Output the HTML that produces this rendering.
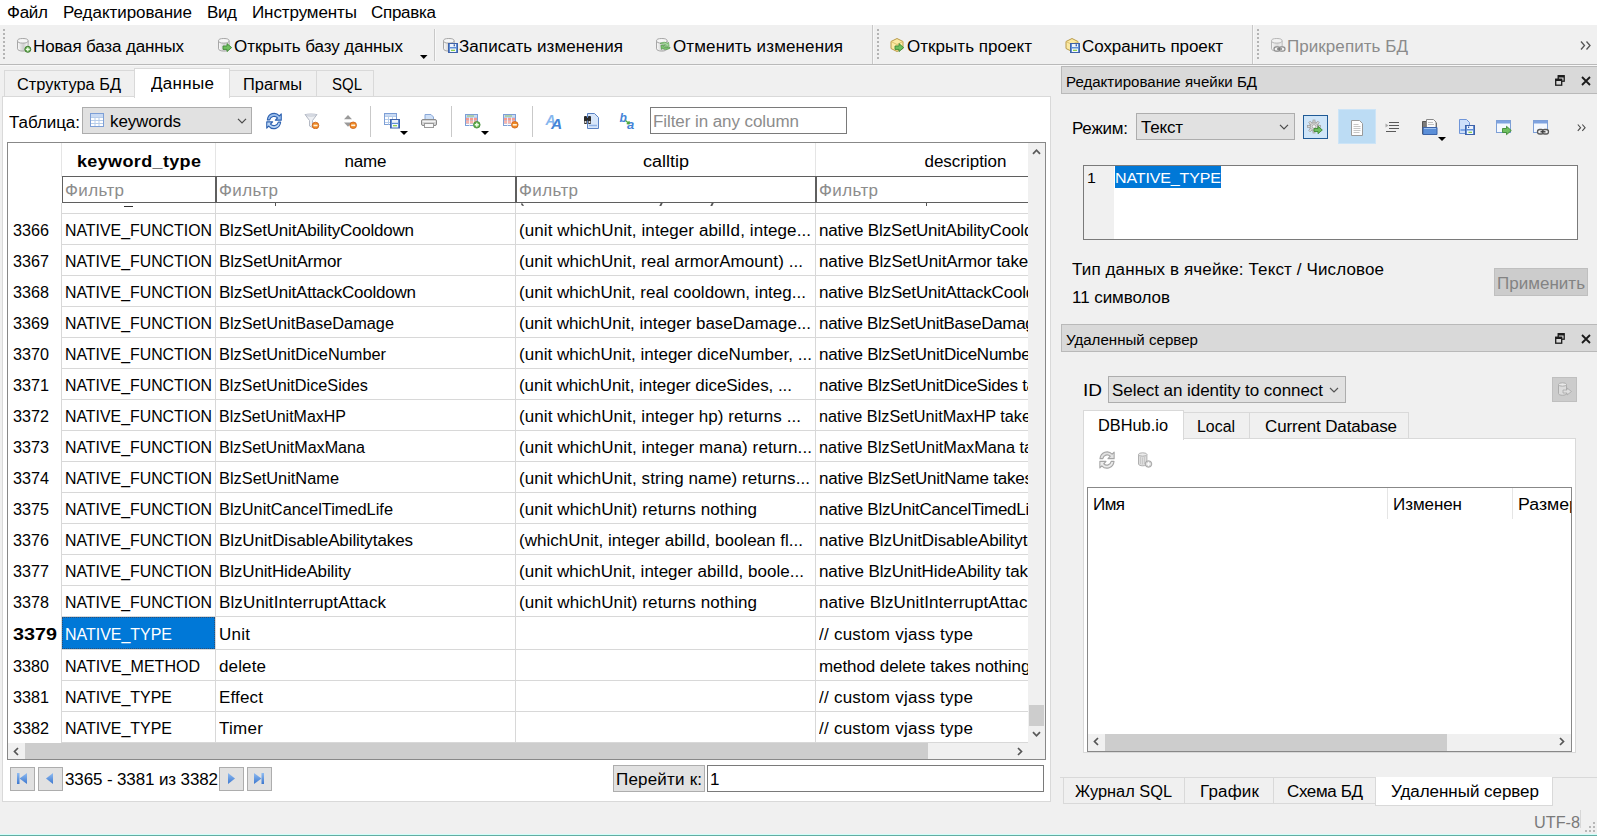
<!DOCTYPE html>
<html lang="ru"><head><meta charset="utf-8"><title>DB Browser for SQLite</title>
<style>
html,body{margin:0;padding:0;}
body{width:1597px;height:836px;overflow:hidden;background:#f0f0f0;font-family:"Liberation Sans", "DejaVu Sans", sans-serif;font-size:17px;position:relative;}
#root{position:absolute;left:0;top:0;width:1597px;height:836px;overflow:hidden;}
#root div,#root span,#root svg{position:absolute;box-sizing:border-box;}
.t{white-space:nowrap;transform:scaleY(0.955);}
</style></head>
<body><div id="root">
<div style="left:0px;top:0px;width:1597px;height:25px;background:#ffffff;"></div>
<span id="t0" class="t " style="top:3px;font-size:17px;line-height:20px;transform-origin:0 15px;letter-spacing:-0.266px;left:7px;">Файл</span>
<span id="t1" class="t " style="top:3px;font-size:17px;line-height:20px;transform-origin:0 15px;letter-spacing:-0.040px;left:63px;">Редактирование</span>
<span id="t2" class="t " style="top:3px;font-size:17px;line-height:20px;transform-origin:0 15px;letter-spacing:-0.383px;left:207px;">Вид</span>
<span id="t3" class="t " style="top:3px;font-size:17px;line-height:20px;transform-origin:0 15px;letter-spacing:-0.102px;left:252px;">Инструменты</span>
<span id="t4" class="t " style="top:3px;font-size:17px;line-height:20px;transform-origin:0 15px;letter-spacing:-0.284px;left:371px;">Справка</span>
<div style="left:0px;top:25px;width:1597px;height:39px;background:#f0f0f0;"></div>
<div style="left:0px;top:64px;width:1597px;height:1px;background:#b9b9b9;"></div>
<div style="left:0px;top:65px;width:1597px;height:1px;background:#f8f8f8;"></div>
<div style="left:3px;top:29px;width:2px;height:32px;background:repeating-linear-gradient(to bottom,#b4b4b4 0,#b4b4b4 2px,transparent 2px,transparent 4px);"></div>
<svg style="left:16px;top:37px" width="16" height="16" viewBox="0 0 16 16"><defs><linearGradient id="cg1" x1="0" y1="0" x2="1" y2="0"><stop offset="0" stop-color="#fbfbfb"/><stop offset="0.550" stop-color="#cfcfcf"/><stop offset="1" stop-color="#fbfbfb"/></linearGradient></defs><path d="M1.500 3.800v8c0 1.300 2.400 2.300 5.300 2.300s5.300-1 5.300-2.300v-8" fill="url(#cg1)" stroke="#a6a6a6"/><ellipse cx="6.800" cy="3.800" rx="5.300" ry="2.300" fill="#f6f6f6" stroke="#a6a6a6"/><circle cx="11.800" cy="12.300" r="3" fill="#6fb45c" stroke="#3f7a30" stroke-width="1"/><path d="M11.800 10.400v3.800M9.900 12.300h3.800" stroke="#efffe8" stroke-width="1.300"/></svg>
<span id="t5" class="t " style="top:37px;font-size:17px;line-height:20px;transform-origin:0 15px;letter-spacing:-0.151px;left:33px;">Новая база данных</span>
<svg style="left:217px;top:37px" width="16" height="16" viewBox="0 0 16 16"><defs><linearGradient id="cg2" x1="0" y1="0" x2="1" y2="0"><stop offset="0" stop-color="#fbfbfb"/><stop offset="0.550" stop-color="#cfcfcf"/><stop offset="1" stop-color="#fbfbfb"/></linearGradient></defs><path d="M1.500 3.800v8c0 1.300 2.400 2.300 5.300 2.300s5.300-1 5.300-2.300v-8" fill="url(#cg2)" stroke="#a6a6a6"/><ellipse cx="6.800" cy="3.800" rx="5.300" ry="2.300" fill="#f6f6f6" stroke="#a6a6a6"/><path d="M6 9h4V6.6l4.6 4-4.6 4V12.4H6z" fill="#6fbf5f" stroke="#3f8a35" stroke-width="0.9" stroke-linejoin="round"/></svg>
<span id="t6" class="t " style="top:37px;font-size:17px;line-height:20px;transform-origin:0 15px;letter-spacing:-0.044px;left:234px;">Открыть базу данных</span>
<svg style="left:420px;top:55px" width="8" height="4" viewBox="0 0 8 4"><path d="M0 0h7.500L3.750 4z" fill="#000"/></svg>
<div style="left:434px;top:29px;width:1px;height:32px;background:#c8c8c8;"></div>
<div style="left:435px;top:29px;width:1px;height:32px;background:#f8f8f8;"></div>
<svg style="left:442px;top:37px" width="16" height="16" viewBox="0 0 16 16"><defs><linearGradient id="cg3" x1="0" y1="0" x2="1" y2="0"><stop offset="0" stop-color="#fbfbfb"/><stop offset="0.550" stop-color="#cfcfcf"/><stop offset="1" stop-color="#fbfbfb"/></linearGradient></defs><path d="M1.500 3.800v8c0 1.300 2.400 2.300 5.300 2.300s5.300-1 5.300-2.300v-8" fill="url(#cg3)" stroke="#a6a6a6"/><ellipse cx="6.800" cy="3.800" rx="5.300" ry="2.300" fill="#f6f6f6" stroke="#a6a6a6"/><rect x="6.5" y="6.5" width="9" height="9" fill="#5f8ed6" stroke="#3f62a8"/><rect x="8" y="7" width="6" height="3" fill="#eef3fb"/><rect x="11.6" y="7.3" width="1.4" height="2" fill="#3f62a8"/><rect x="8" y="11.5" width="6" height="3.5" fill="#f4f7fd"/><rect x="9" y="12.7" width="4" height="1.3" fill="#8fcf4f"/></svg>
<span id="t7" class="t " style="top:37px;font-size:17px;line-height:20px;transform-origin:0 15px;letter-spacing:0.074px;left:459px;">Записать изменения</span>
<svg style="left:655px;top:37px" width="16" height="16" viewBox="0 0 16 16"><defs><linearGradient id="cg4" x1="0" y1="0" x2="1" y2="0"><stop offset="0" stop-color="#fbfbfb"/><stop offset="0.550" stop-color="#cfcfcf"/><stop offset="1" stop-color="#fbfbfb"/></linearGradient></defs><path d="M1.500 3.800v8c0 1.300 2.400 2.300 5.300 2.300s5.300-1 5.300-2.300v-8" fill="url(#cg4)" stroke="#a6a6a6"/><ellipse cx="6.800" cy="3.800" rx="5.300" ry="2.300" fill="#f6f6f6" stroke="#a6a6a6"/><path d="M5 6.5c3-1.8 6-1.5 7.5 0l1-1.2.6 4-4 .1 1.1-1.3C10 7 7.5 7 5 6.5z" fill="#a8dba0" stroke="#5fa255" stroke-width="0.700"/><path d="M15 11.2c-3 1.8-6 1.5-7.5 0l-1 1.2-.6-4 4-.1-1.1 1.3c1.2 1.1 3.700 1.100 6.200.6z" fill="#7cc470" stroke="#4d9444" stroke-width="0.700"/></svg>
<span id="t8" class="t " style="top:37px;font-size:17px;line-height:20px;transform-origin:0 15px;letter-spacing:0.131px;left:673px;">Отменить изменения</span>
<div style="left:872px;top:25px;width:1px;height:39px;background:#c8c8c8;"></div>
<div style="left:873px;top:25px;width:1px;height:39px;background:#f8f8f8;"></div>
<div style="left:877px;top:29px;width:2px;height:32px;background:repeating-linear-gradient(to bottom,#b4b4b4 0,#b4b4b4 2px,transparent 2px,transparent 4px);"></div>
<svg style="left:889px;top:37px" width="16" height="16" viewBox="0 0 16 16"><path d="M8 1.5l6 3v7l-6 3-6-3v-7z" fill="#fbe9a3" stroke="#b89a4a" stroke-linejoin="round"/><path d="M2 4.5l6 3 6-3M8 7.5v7" fill="none" stroke="#d6b65e" stroke-width="0.8"/><path d="M6 9h4V6.6l4.6 4-4.6 4V12.4H6z" fill="#6fbf5f" stroke="#3f8a35" stroke-width="0.9" stroke-linejoin="round"/></svg>
<span id="t9" class="t " style="top:37px;font-size:17px;line-height:20px;transform-origin:0 15px;letter-spacing:0.040px;left:907px;">Открыть проект</span>
<svg style="left:1064px;top:37px" width="16" height="16" viewBox="0 0 16 16"><path d="M8 1.5l6 3v7l-6 3-6-3v-7z" fill="#fbe9a3" stroke="#b89a4a" stroke-linejoin="round"/><path d="M2 4.5l6 3 6-3M8 7.5v7" fill="none" stroke="#d6b65e" stroke-width="0.8"/><rect x="6.5" y="6.5" width="9" height="9" fill="#5f8ed6" stroke="#3f62a8"/><rect x="8" y="7" width="6" height="3" fill="#eef3fb"/><rect x="11.6" y="7.3" width="1.4" height="2" fill="#3f62a8"/><rect x="8" y="11.5" width="6" height="3.5" fill="#f4f7fd"/><rect x="9" y="12.7" width="4" height="1.3" fill="#8fcf4f"/></svg>
<span id="t10" class="t " style="top:37px;font-size:17px;line-height:20px;transform-origin:0 15px;letter-spacing:-0.079px;left:1082px;">Сохранить проект</span>
<div style="left:1252px;top:25px;width:1px;height:39px;background:#c8c8c8;"></div>
<div style="left:1253px;top:25px;width:1px;height:39px;background:#f8f8f8;"></div>
<div style="left:1257px;top:29px;width:2px;height:32px;background:repeating-linear-gradient(to bottom,#b4b4b4 0,#b4b4b4 2px,transparent 2px,transparent 4px);"></div>
<svg style="left:1270px;top:37px" width="16" height="16" viewBox="0 0 16 16"><defs><linearGradient id="cg5" x1="0" y1="0" x2="1" y2="0"><stop offset="0" stop-color="#f6f6f6"/><stop offset="0.550" stop-color="#dadada"/><stop offset="1" stop-color="#f6f6f6"/></linearGradient></defs><path d="M1.500 3.800v8c0 1.300 2.400 2.300 5.300 2.300s5.300-1 5.300-2.300v-8" fill="url(#cg5)" stroke="#b6b6b6"/><ellipse cx="6.800" cy="3.800" rx="5.300" ry="2.300" fill="#f2f2f2" stroke="#b6b6b6"/><rect x="4" y="9.800" width="6" height="4.400" rx="2.200" fill="#f2f2f2" stroke="#8c8c8c" stroke-width="1.2"/><rect x="9" y="9.800" width="6" height="4.400" rx="2.200" fill="#f2f2f2" stroke="#8c8c8c" stroke-width="1.2"/><path d="M7 12h5" stroke="#6c6c6c" stroke-width="1.3"/></svg>
<span id="t11" class="t " style="top:37px;font-size:17px;line-height:20px;color:#8b8b8b;transform-origin:0 15px;letter-spacing:0.061px;left:1287px;">Прикрепить БД</span>
<svg style="left:1580px;top:41px" width="12" height="9" viewBox="0 0 12 9"><path d="M1 0.500l3.500 4-3.500 4M6.500 0.500l3.500 4-3.500 4" fill="none" stroke="#555" stroke-width="1.300"/></svg>
<div style="left:2px;top:96px;width:1049px;height:706px;background:#ffffff;border:1px solid #d9d9d9;"></div>
<div style="left:4px;top:70px;width:131px;height:27px;background:#f0f0f0;border:1px solid #d9d9d9;"></div>
<span id="t12" class="t " style="top:75px;font-size:17px;line-height:20px;transform-origin:0 15px;transform:scale(0.9625,0.955);left:17px;">Структура БД</span>
<div style="left:228px;top:70px;width:89px;height:27px;background:#f0f0f0;border:1px solid #d9d9d9;"></div>
<span id="t13" class="t " style="top:75px;font-size:17px;line-height:20px;transform-origin:0 15px;transform:scale(0.9633,0.955);left:243px;">Прагмы</span>
<div style="left:316px;top:70px;width:58px;height:27px;background:#f0f0f0;border:1px solid #d9d9d9;"></div>
<span id="t14" class="t " style="top:75px;font-size:17px;line-height:20px;transform-origin:0 15px;transform:scale(0.8815,0.955);left:332px;">SQL</span>
<div style="left:134px;top:68px;width:96px;height:30px;background:#ffffff;border:1px solid #d9d9d9;border-bottom:none;"></div>
<span id="t15" class="t " style="top:74px;font-size:17px;line-height:20px;transform-origin:0 15px;letter-spacing:0.316px;left:151px;">Данные</span>
<span id="t16" class="t " style="top:113px;font-size:17px;line-height:20px;transform-origin:0 15px;letter-spacing:-0.056px;left:9px;">Таблица:</span>
<div style="left:82px;top:107px;width:170px;height:27px;background:#e1e1e1;border:1px solid #adadad;"></div>
<svg style="left:89px;top:112px" width="16" height="16" viewBox="0 0 16 16"><rect x="1.5" y="1.500" width="13" height="13" fill="#ffffff" stroke="#7d9fd6"/><rect x="2" y="2" width="12" height="3" fill="#c9daf3"/><path d="M2 5.500h12M2 8.500h12M2 11.500h12M6 5v9M10 5v9" stroke="#b7cdea" stroke-width="1" fill="none"/></svg>
<span id="t17" class="t " style="top:112px;font-size:17px;line-height:20px;transform-origin:0 15px;letter-spacing:-0.116px;left:110px;">keywords</span>
<svg style="left:237px;top:118px" width="10" height="6" viewBox="0 0 10 6"><path d="M1 0.800l4 4 4-4" fill="none" stroke="#4a4a4a" stroke-width="1.200"/></svg>
<svg style="left:266px;top:112px" width="16" height="18" viewBox="1.500 1.200 13 13.600" preserveAspectRatio="none"><path d="M2.600 7.200A5.500 5.500 0 0 1 12.300 4.200L13.900 2.600v4.800H9.100l1.700-1.700A3.700 3.700 0 0 0 4.500 7.200z" fill="#9ec1ee" stroke="#2f62b0" stroke-width="0.900" stroke-linejoin="round"/><path d="M13.400 8.800A5.500 5.500 0 0 1 3.700 11.800L2.100 13.400V8.600H6.900L5.200 10.300A3.700 3.700 0 0 0 11.500 8.800z" fill="#bcd6f5" stroke="#2f62b0" stroke-width="0.900" stroke-linejoin="round"/></svg>
<svg style="left:304px;top:113px" width="16" height="16" viewBox="0 0 16 16"><path d="M1 1.500h12L8.500 7.500v7l-3-1.500v-5.500z" fill="#eef0f4" stroke="#b4b9c4" stroke-linejoin="round"/><ellipse cx="7" cy="2" rx="5.500" ry="1.200" fill="#dfe3ea" stroke="#b4b9c4" stroke-width="0.600"/><circle cx="11.5" cy="12.5" r="3.300" fill="#f08a24" stroke="#c8601a" stroke-width="0.800"/><rect x="9.5" y="11.7" width="4" height="1.600" fill="#fff3e0"/></svg>
<svg style="left:342px;top:113px" width="16" height="16" viewBox="0 0 16 16"><path d="M2 6.300h8L6 2z" fill="#9a9a9a"/><path d="M2 9.500h8L6 13.800z" fill="#9a9a9a"/><circle cx="11.2" cy="12.3" r="3.300" fill="#f08a24" stroke="#c8601a" stroke-width="0.800"/><rect x="9.2" y="11.5" width="4" height="1.600" fill="#fff3e0"/></svg>
<div style="left:370px;top:106px;width:1px;height:31px;background:#c9c9c9;"></div>
<svg style="left:384px;top:112px" width="16" height="17" viewBox="0 0 16 17"><rect x="0.500" y="1.500" width="12" height="11" fill="#ffffff" stroke="#7d9fd6"/><rect x="1" y="2" width="11" height="2.500" fill="#c9daf3"/><path d="M1 4.500h11M1 7.500h11M1 10.500h11M4.500 4.500v8M8.500 4.500v8" stroke="#b7cdea" fill="none"/><rect x="6.500" y="7.500" width="9" height="8.500" fill="#5f8ed6" stroke="#3f62a8"/><rect x="8" y="8" width="6" height="2.800" fill="#eef3fb"/><rect x="8" y="12" width="6" height="3.500" fill="#f4f7fd"/><rect x="9" y="13" width="4" height="1.300" fill="#8fcf4f"/></svg>
<svg style="left:400px;top:131px" width="8" height="4" viewBox="0 0 8 4"><path d="M0 0h8L4 4z" fill="#000"/></svg>
<svg style="left:421px;top:113px" width="16" height="16" viewBox="0 0 16 16"><path d="M4 1.500h6l2.500 2.500v4h-8.500z" fill="#cfe0f7" stroke="#8aa8d8"/><rect x="0.500" y="6.500" width="15" height="6" rx="1.500" fill="#d4d4d4" stroke="#8a8a8a"/><rect x="3.500" y="10.500" width="9" height="4" fill="#fafafa" stroke="#9a9a9a"/><path d="M1.500 8.500h13" stroke="#f4f4f4"/></svg>
<div style="left:451px;top:106px;width:1px;height:31px;background:#c9c9c9;"></div>
<svg style="left:465px;top:113px" width="16" height="16" viewBox="0 0 16 16"><rect x="0.500" y="1.500" width="12" height="11" fill="#ffffff" stroke="#7d9fd6"/><rect x="1" y="2" width="11" height="2.500" fill="#c9daf3"/><path d="M1 4.500h11M1 7.500h11M1 10.500h11M4.500 4.500v8M8.500 4.500v8" stroke="#b7cdea" fill="none"/><rect x="1" y="5" width="11" height="2.500" fill="#f59a90"/><rect x="1" y="8" width="11" height="2.500" fill="#f8b4ac"/><path d="M4.500 4.500v8M8.500 4.500v8" stroke="#ffffff" stroke-width="0.800"/><path d="M2 3h7" stroke="#8fc06a" stroke-width="1"/><circle cx="11.8" cy="11.8" r="3.300" fill="#62ad4e" stroke="#3f8a35" stroke-width="0.800"/><path d="M11.8 9.8v4M9.8 11.8h4" stroke="#f0ffe8" stroke-width="1.400"/></svg>
<svg style="left:481px;top:131px" width="8" height="4" viewBox="0 0 8 4"><path d="M0 0h8L4 4z" fill="#000"/></svg>
<svg style="left:503px;top:113px" width="16" height="16" viewBox="0 0 16 16"><rect x="0.500" y="1.500" width="12" height="11" fill="#ffffff" stroke="#7d9fd6"/><rect x="1" y="2" width="11" height="2.500" fill="#c9daf3"/><path d="M1 4.500h11M1 7.500h11M1 10.500h11M4.500 4.500v8M8.500 4.500v8" stroke="#b7cdea" fill="none"/><rect x="1" y="5" width="11" height="2.500" fill="#f59a90"/><rect x="1" y="8" width="11" height="2.500" fill="#f8b4ac"/><path d="M4.500 4.500v8M8.500 4.500v8" stroke="#ffffff" stroke-width="0.800"/><path d="M2 3h7" stroke="#8fc06a" stroke-width="1"/><circle cx="11.8" cy="11.8" r="3.300" fill="#f08a24" stroke="#c8601a" stroke-width="0.800"/><rect x="9.8" y="11.0" width="4" height="1.600" fill="#fff3e0"/></svg>
<div style="left:532px;top:106px;width:1px;height:31px;background:#c9c9c9;"></div>
<svg style="left:545px;top:112px" width="19" height="18" viewBox="0 0 19 18"><text x="0.500" y="12.500" font-family="Liberation Sans, sans-serif" font-size="14" font-style="italic" font-weight="bold" fill="#86b6ee">A</text><text x="6" y="16.500" font-family="Liberation Sans, sans-serif" font-size="15.500" font-style="italic" font-weight="bold" fill="#4484d8">A</text></svg>
<svg style="left:583px;top:113px" width="16" height="16" viewBox="0 0 16 16"><path d="M4.500 0.500h7l4 4v11h-11z" fill="#d7e6fa" stroke="#5a82c4"/><path d="M6 12.500h8" stroke="#8fb2e6" stroke-width="1.500"/><rect x="1" y="3" width="3" height="8" rx="1" fill="#2a2a2a"/><rect x="5" y="3" width="3" height="8" rx="1" fill="#2a2a2a"/><rect x="3.500" y="5" width="2" height="2.500" fill="#2a2a2a"/><rect x="1.600" y="8" width="1.800" height="2" fill="#d8d8d8"/><rect x="5.600" y="8" width="1.800" height="2" fill="#d8d8d8"/></svg>
<svg style="left:619px;top:111px" width="19" height="19" viewBox="0 0 19 19"><text x="0.500" y="11" font-family="Liberation Sans, sans-serif" font-size="12" font-style="italic" font-weight="bold" fill="#4484d8">b</text><text x="8" y="18" font-family="Liberation Sans, sans-serif" font-size="13" font-style="italic" font-weight="bold" fill="#4484d8">a</text><path d="M6.500 9.500l3.500 3M10.300 12.800l-0.400-2.600M10.300 12.800l-2.600-0.200" stroke="#4fa83f" stroke-width="1.300" fill="none"/></svg>
<div style="left:650px;top:107px;width:197px;height:27px;background:#ffffff;border:1px solid #7a7a7a;"></div>
<span id="t18" class="t " style="top:112px;font-size:17px;line-height:20px;color:#8c8c8c;transform-origin:0 15px;letter-spacing:-0.073px;left:653px;">Filter in any column</span>
<div style="left:7px;top:142px;width:1039px;height:618px;background:#ffffff;border:1px solid #888888;"></div>
<div style="left:61px;top:143px;width:1px;height:34px;background:#e5e5e5;"></div>
<div style="left:215px;top:143px;width:1px;height:34px;background:#e5e5e5;"></div>
<div style="left:515px;top:143px;width:1px;height:34px;background:#e5e5e5;"></div>
<div style="left:815px;top:143px;width:1px;height:34px;background:#e5e5e5;"></div>
<span id="t19" class="t " style="top:151px;font-size:18px;line-height:20px;font-weight:bold;transform-origin:0 16px;letter-spacing:0.358px;left:77.0px;">keyword_type</span>
<span id="t20" class="t " style="top:152px;font-size:17px;line-height:20px;transform-origin:0 15px;letter-spacing:-0.177px;left:344.5px;">name</span>
<span id="t21" class="t " style="top:152px;font-size:17px;line-height:20px;transform-origin:0 15px;transform:scale(1.0582,0.955);left:642.5px;">calltip</span>
<span id="t22" class="t " style="top:152px;font-size:17px;line-height:20px;transform-origin:0 15px;letter-spacing:-0.022px;left:924.5px;">description</span>
<div style="left:62px;top:176px;width:154px;height:27px;background:#ffffff;border:1px solid #5f5f5f;"></div>
<span id="t23" class="t " style="top:181px;font-size:17px;line-height:20px;color:#8c8c8c;transform-origin:0 15px;letter-spacing:0.378px;left:65px;">Фильтр</span>
<div style="left:216px;top:176px;width:300px;height:27px;background:#ffffff;border:1px solid #5f5f5f;"></div>
<span id="t24" class="t " style="top:181px;font-size:17px;line-height:20px;color:#8c8c8c;transform-origin:0 15px;letter-spacing:0.378px;left:219px;">Фильтр</span>
<div style="left:516px;top:176px;width:300px;height:27px;background:#ffffff;border:1px solid #5f5f5f;"></div>
<span id="t25" class="t " style="top:181px;font-size:17px;line-height:20px;color:#8c8c8c;transform-origin:0 15px;letter-spacing:0.378px;left:519px;">Фильтр</span>
<div style="left:816px;top:176px;width:300px;height:27px;background:#ffffff;border:1px solid #5f5f5f;clip-path:inset(0 88px 0 0);"></div>
<span id="t26" class="t " style="top:181px;font-size:17px;line-height:20px;color:#8c8c8c;transform-origin:0 15px;letter-spacing:0.378px;left:819px;">Фильтр</span>
<div style="left:61px;top:203px;width:1px;height:540px;background:#d8d8d8;"></div>
<div style="left:215px;top:203px;width:1px;height:540px;background:#d8d8d8;"></div>
<div style="left:515px;top:203px;width:1px;height:540px;background:#d8d8d8;"></div>
<div style="left:815px;top:203px;width:1px;height:540px;background:#d8d8d8;"></div>
<div style="left:62px;top:213px;width:966px;height:1px;background:#d8d8d8;"></div>
<div style="left:124px;top:206px;width:9px;height:1px;background:#303030;"></div>
<div style="left:275px;top:203px;width:1px;height:3px;background:#555;"></div>
<div style="left:521px;top:203px;width:3px;height:3px;border-bottom:1.500px solid #444;border-left:1.500px solid #444;border-radius:0 0 0 3px;transform:skewX(-10deg)"></div>
<div style="left:660px;top:203px;width:2px;height:3px;background:#555;transform:skewX(-25deg)"></div>
<div style="left:711px;top:203px;width:2px;height:3px;background:#555;transform:skewX(-25deg)"></div>
<div style="left:926px;top:203px;width:1px;height:3px;background:#555;"></div>
<span id="t27" class="t " style="top:221px;font-size:17px;line-height:20px;transform-origin:0 15px;transform:scale(0.9517,0.955);left:13px;">3366</span>
<span id="t28" class="t " style="top:221px;font-size:17px;line-height:20px;transform-origin:0 15px;transform:scale(0.9338,0.955);left:65px;">NATIVE_FUNCTION</span>
<span id="t29" class="t " style="top:221px;font-size:17px;line-height:20px;transform-origin:0 15px;letter-spacing:-0.222px;left:219px;">BlzSetUnitAbilityCooldown</span>
<span id="t30" class="t " style="top:221px;font-size:17px;line-height:20px;transform-origin:0 15px;letter-spacing:0.092px;left:519px;">(unit whichUnit, integer abilId, intege...</span>
<span id="t31" class="t desc" style="top:221px;font-size:17px;line-height:20px;transform-origin:0 15px;letter-spacing:-0.174px;left:819px;width:209.0px;overflow:hidden;">native BlzSetUnitAbilityCooldown takes unit whichUnit</span>
<div style="left:62px;top:244px;width:966px;height:1px;background:#d8d8d8;"></div>
<span id="t32" class="t " style="top:252px;font-size:17px;line-height:20px;transform-origin:0 15px;transform:scale(0.9517,0.955);left:13px;">3367</span>
<span id="t33" class="t " style="top:252px;font-size:17px;line-height:20px;transform-origin:0 15px;transform:scale(0.9338,0.955);left:65px;">NATIVE_FUNCTION</span>
<span id="t34" class="t " style="top:252px;font-size:17px;line-height:20px;transform-origin:0 15px;letter-spacing:-0.189px;left:219px;">BlzSetUnitArmor</span>
<span id="t35" class="t " style="top:252px;font-size:17px;line-height:20px;transform-origin:0 15px;letter-spacing:0.066px;left:519px;">(unit whichUnit, real armorAmount) ...</span>
<span id="t36" class="t desc" style="top:252px;font-size:17px;line-height:20px;transform-origin:0 15px;letter-spacing:-0.130px;left:819px;width:209.0px;overflow:hidden;">native BlzSetUnitArmor takes unit whichUnit, real</span>
<div style="left:62px;top:275px;width:966px;height:1px;background:#d8d8d8;"></div>
<span id="t37" class="t " style="top:283px;font-size:17px;line-height:20px;transform-origin:0 15px;transform:scale(0.9517,0.955);left:13px;">3368</span>
<span id="t38" class="t " style="top:283px;font-size:17px;line-height:20px;transform-origin:0 15px;transform:scale(0.9338,0.955);left:65px;">NATIVE_FUNCTION</span>
<span id="t39" class="t " style="top:283px;font-size:17px;line-height:20px;transform-origin:0 15px;letter-spacing:-0.227px;left:219px;">BlzSetUnitAttackCooldown</span>
<span id="t40" class="t " style="top:283px;font-size:17px;line-height:20px;transform-origin:0 15px;letter-spacing:0.018px;left:519px;">(unit whichUnit, real cooldown, integ...</span>
<span id="t41" class="t desc" style="top:283px;font-size:17px;line-height:20px;transform-origin:0 15px;letter-spacing:-0.177px;left:819px;width:209.0px;overflow:hidden;">native BlzSetUnitAttackCooldown takes unit whichUnit</span>
<div style="left:62px;top:306px;width:966px;height:1px;background:#d8d8d8;"></div>
<span id="t42" class="t " style="top:314px;font-size:17px;line-height:20px;transform-origin:0 15px;transform:scale(0.9517,0.955);left:13px;">3369</span>
<span id="t43" class="t " style="top:314px;font-size:17px;line-height:20px;transform-origin:0 15px;transform:scale(0.9338,0.955);left:65px;">NATIVE_FUNCTION</span>
<span id="t44" class="t " style="top:314px;font-size:17px;line-height:20px;transform-origin:0 15px;transform:scale(0.9596,0.955);left:219px;">BlzSetUnitBaseDamage</span>
<span id="t45" class="t " style="top:314px;font-size:17px;line-height:20px;transform-origin:0 15px;letter-spacing:-0.025px;left:519px;">(unit whichUnit, integer baseDamage...</span>
<span id="t46" class="t desc" style="top:314px;font-size:17px;line-height:20px;transform-origin:0 15px;letter-spacing:-0.287px;left:819px;width:209.0px;overflow:hidden;">native BlzSetUnitBaseDamage takes unit whichUnit</span>
<div style="left:62px;top:337px;width:966px;height:1px;background:#d8d8d8;"></div>
<span id="t47" class="t " style="top:345px;font-size:17px;line-height:20px;transform-origin:0 15px;transform:scale(0.9517,0.955);left:13px;">3370</span>
<span id="t48" class="t " style="top:345px;font-size:17px;line-height:20px;transform-origin:0 15px;transform:scale(0.9338,0.955);left:65px;">NATIVE_FUNCTION</span>
<span id="t49" class="t " style="top:345px;font-size:17px;line-height:20px;transform-origin:0 15px;transform:scale(0.9606,0.955);left:219px;">BlzSetUnitDiceNumber</span>
<span id="t50" class="t " style="top:345px;font-size:17px;line-height:20px;transform-origin:0 15px;letter-spacing:0.026px;left:519px;">(unit whichUnit, integer diceNumber, ...</span>
<span id="t51" class="t desc" style="top:345px;font-size:17px;line-height:20px;transform-origin:0 15px;letter-spacing:-0.266px;left:819px;width:209.0px;overflow:hidden;">native BlzSetUnitDiceNumber takes unit whichUnit</span>
<div style="left:62px;top:368px;width:966px;height:1px;background:#d8d8d8;"></div>
<span id="t52" class="t " style="top:376px;font-size:17px;line-height:20px;transform-origin:0 15px;transform:scale(0.9517,0.955);left:13px;">3371</span>
<span id="t53" class="t " style="top:376px;font-size:17px;line-height:20px;transform-origin:0 15px;transform:scale(0.9338,0.955);left:65px;">NATIVE_FUNCTION</span>
<span id="t54" class="t " style="top:376px;font-size:17px;line-height:20px;transform-origin:0 15px;transform:scale(0.9557,0.955);left:219px;">BlzSetUnitDiceSides</span>
<span id="t55" class="t " style="top:376px;font-size:17px;line-height:20px;transform-origin:0 15px;letter-spacing:-0.052px;left:519px;">(unit whichUnit, integer diceSides, ...</span>
<span id="t56" class="t desc" style="top:376px;font-size:17px;line-height:20px;transform-origin:0 15px;letter-spacing:-0.279px;left:819px;width:209.0px;overflow:hidden;">native BlzSetUnitDiceSides takes unit whichUnit</span>
<div style="left:62px;top:399px;width:966px;height:1px;background:#d8d8d8;"></div>
<span id="t57" class="t " style="top:407px;font-size:17px;line-height:20px;transform-origin:0 15px;transform:scale(0.9517,0.955);left:13px;">3372</span>
<span id="t58" class="t " style="top:407px;font-size:17px;line-height:20px;transform-origin:0 15px;transform:scale(0.9338,0.955);left:65px;">NATIVE_FUNCTION</span>
<span id="t59" class="t " style="top:407px;font-size:17px;line-height:20px;transform-origin:0 15px;transform:scale(0.9400,0.955);left:219px;">BlzSetUnitMaxHP</span>
<span id="t60" class="t " style="top:407px;font-size:17px;line-height:20px;transform-origin:0 15px;letter-spacing:0.084px;left:519px;">(unit whichUnit, integer hp) returns ...</span>
<span id="t61" class="t desc" style="top:407px;font-size:17px;line-height:20px;transform-origin:0 15px;transform:scale(0.9558,0.955);left:819px;width:218.7px;overflow:hidden;">native BlzSetUnitMaxHP takes unit whichUnit</span>
<div style="left:62px;top:430px;width:966px;height:1px;background:#d8d8d8;"></div>
<span id="t62" class="t " style="top:438px;font-size:17px;line-height:20px;transform-origin:0 15px;transform:scale(0.9517,0.955);left:13px;">3373</span>
<span id="t63" class="t " style="top:438px;font-size:17px;line-height:20px;transform-origin:0 15px;transform:scale(0.9338,0.955);left:65px;">NATIVE_FUNCTION</span>
<span id="t64" class="t " style="top:438px;font-size:17px;line-height:20px;transform-origin:0 15px;transform:scale(0.9480,0.955);left:219px;">BlzSetUnitMaxMana</span>
<span id="t65" class="t " style="top:438px;font-size:17px;line-height:20px;transform-origin:0 15px;letter-spacing:0.099px;left:519px;">(unit whichUnit, integer mana) return...</span>
<span id="t66" class="t desc" style="top:438px;font-size:17px;line-height:20px;transform-origin:0 15px;transform:scale(0.9603,0.955);left:819px;width:217.6px;overflow:hidden;">native BlzSetUnitMaxMana takes unit whichUnit</span>
<div style="left:62px;top:461px;width:966px;height:1px;background:#d8d8d8;"></div>
<span id="t67" class="t " style="top:469px;font-size:17px;line-height:20px;transform-origin:0 15px;transform:scale(0.9517,0.955);left:13px;">3374</span>
<span id="t68" class="t " style="top:469px;font-size:17px;line-height:20px;transform-origin:0 15px;transform:scale(0.9338,0.955);left:65px;">NATIVE_FUNCTION</span>
<span id="t69" class="t " style="top:469px;font-size:17px;line-height:20px;transform-origin:0 15px;transform:scale(0.9622,0.955);left:219px;">BlzSetUnitName</span>
<span id="t70" class="t " style="top:469px;font-size:17px;line-height:20px;transform-origin:0 15px;letter-spacing:0.097px;left:519px;">(unit whichUnit, string name) returns...</span>
<span id="t71" class="t desc" style="top:469px;font-size:17px;line-height:20px;transform-origin:0 15px;letter-spacing:-0.241px;left:819px;width:209.0px;overflow:hidden;">native BlzSetUnitName takes unit whichUnit</span>
<div style="left:62px;top:492px;width:966px;height:1px;background:#d8d8d8;"></div>
<span id="t72" class="t " style="top:500px;font-size:17px;line-height:20px;transform-origin:0 15px;transform:scale(0.9517,0.955);left:13px;">3375</span>
<span id="t73" class="t " style="top:500px;font-size:17px;line-height:20px;transform-origin:0 15px;transform:scale(0.9338,0.955);left:65px;">NATIVE_FUNCTION</span>
<span id="t74" class="t " style="top:500px;font-size:17px;line-height:20px;transform-origin:0 15px;transform:scale(0.9625,0.955);left:219px;">BlzUnitCancelTimedLife</span>
<span id="t75" class="t " style="top:500px;font-size:17px;line-height:20px;transform-origin:0 15px;letter-spacing:0.088px;left:519px;">(unit whichUnit) returns nothing</span>
<span id="t76" class="t desc" style="top:500px;font-size:17px;line-height:20px;transform-origin:0 15px;letter-spacing:-0.246px;left:819px;width:209.0px;overflow:hidden;">native BlzUnitCancelTimedLife takes unit whichUnit</span>
<div style="left:62px;top:523px;width:966px;height:1px;background:#d8d8d8;"></div>
<span id="t77" class="t " style="top:531px;font-size:17px;line-height:20px;transform-origin:0 15px;transform:scale(0.9517,0.955);left:13px;">3376</span>
<span id="t78" class="t " style="top:531px;font-size:17px;line-height:20px;transform-origin:0 15px;transform:scale(0.9338,0.955);left:65px;">NATIVE_FUNCTION</span>
<span id="t79" class="t " style="top:531px;font-size:17px;line-height:20px;transform-origin:0 15px;letter-spacing:-0.101px;left:219px;">BlzUnitDisableAbilitytakes</span>
<span id="t80" class="t " style="top:531px;font-size:17px;line-height:20px;transform-origin:0 15px;letter-spacing:0.013px;left:519px;">(whichUnit, integer abilId, boolean fl...</span>
<span id="t81" class="t desc" style="top:531px;font-size:17px;line-height:20px;transform-origin:0 15px;letter-spacing:-0.082px;left:819px;width:209.0px;overflow:hidden;">native BlzUnitDisableAbilitytakes unit whichUnit</span>
<div style="left:62px;top:554px;width:966px;height:1px;background:#d8d8d8;"></div>
<span id="t82" class="t " style="top:562px;font-size:17px;line-height:20px;transform-origin:0 15px;transform:scale(0.9517,0.955);left:13px;">3377</span>
<span id="t83" class="t " style="top:562px;font-size:17px;line-height:20px;transform-origin:0 15px;transform:scale(0.9338,0.955);left:65px;">NATIVE_FUNCTION</span>
<span id="t84" class="t " style="top:562px;font-size:17px;line-height:20px;transform-origin:0 15px;letter-spacing:-0.128px;left:219px;">BlzUnitHideAbility</span>
<span id="t85" class="t " style="top:562px;font-size:17px;line-height:20px;transform-origin:0 15px;letter-spacing:0.037px;left:519px;">(unit whichUnit, integer abilId, boole...</span>
<span id="t86" class="t desc" style="top:562px;font-size:17px;line-height:20px;transform-origin:0 15px;letter-spacing:-0.094px;left:819px;width:209.0px;overflow:hidden;">native BlzUnitHideAbility takes unit whichUnit</span>
<div style="left:62px;top:585px;width:966px;height:1px;background:#d8d8d8;"></div>
<span id="t87" class="t " style="top:593px;font-size:17px;line-height:20px;transform-origin:0 15px;transform:scale(0.9517,0.955);left:13px;">3378</span>
<span id="t88" class="t " style="top:593px;font-size:17px;line-height:20px;transform-origin:0 15px;transform:scale(0.9338,0.955);left:65px;">NATIVE_FUNCTION</span>
<span id="t89" class="t " style="top:593px;font-size:17px;line-height:20px;transform-origin:0 15px;letter-spacing:0.124px;left:219px;">BlzUnitInterruptAttack</span>
<span id="t90" class="t " style="top:593px;font-size:17px;line-height:20px;transform-origin:0 15px;letter-spacing:0.088px;left:519px;">(unit whichUnit) returns nothing</span>
<span id="t91" class="t desc" style="top:593px;font-size:17px;line-height:20px;transform-origin:0 15px;letter-spacing:0.090px;left:819px;width:209.0px;overflow:hidden;">native BlzUnitInterruptAttack takes unit whichUnit</span>
<div style="left:62px;top:616px;width:966px;height:1px;background:#d8d8d8;"></div>
<div style="left:62px;top:617px;width:153px;height:32px;background:#0078d7;border:1px dotted #2b4f78;"></div>
<span id="t92" class="t " style="top:625px;font-size:17px;line-height:20px;font-weight:bold;transform-origin:0 15px;transform:scale(1.1632,0.955);left:13px;">3379</span>
<span id="t93" class="t " style="top:625px;font-size:17px;line-height:20px;color:#ffffff;transform-origin:0 15px;transform:scale(0.9386,0.955);left:65px;">NATIVE_TYPE</span>
<span id="t94" class="t " style="top:625px;font-size:17px;line-height:20px;transform-origin:0 15px;letter-spacing:0.255px;left:219px;">Unit</span>
<span id="t95" class="t " style="top:625px;font-size:17px;line-height:20px;transform-origin:0 15px;letter-spacing:0.248px;left:819px;">// custom vjass type</span>
<div style="left:62px;top:649px;width:966px;height:1px;background:#d8d8d8;"></div>
<span id="t96" class="t " style="top:657px;font-size:17px;line-height:20px;transform-origin:0 15px;transform:scale(0.9517,0.955);left:13px;">3380</span>
<span id="t97" class="t " style="top:657px;font-size:17px;line-height:20px;transform-origin:0 15px;transform:scale(0.9423,0.955);left:65px;">NATIVE_METHOD</span>
<span id="t98" class="t " style="top:657px;font-size:17px;line-height:20px;transform-origin:0 15px;letter-spacing:0.134px;left:219px;">delete</span>
<span id="t99" class="t desc" style="top:657px;font-size:17px;line-height:20px;transform-origin:0 15px;letter-spacing:-0.086px;left:819px;width:209.0px;overflow:hidden;">method delete takes nothing returns nothing</span>
<div style="left:62px;top:680px;width:966px;height:1px;background:#d8d8d8;"></div>
<span id="t100" class="t " style="top:688px;font-size:17px;line-height:20px;transform-origin:0 15px;transform:scale(0.9517,0.955);left:13px;">3381</span>
<span id="t101" class="t " style="top:688px;font-size:17px;line-height:20px;transform-origin:0 15px;transform:scale(0.9386,0.955);left:65px;">NATIVE_TYPE</span>
<span id="t102" class="t " style="top:688px;font-size:17px;line-height:20px;transform-origin:0 15px;letter-spacing:0.169px;left:219px;">Effect</span>
<span id="t103" class="t " style="top:688px;font-size:17px;line-height:20px;transform-origin:0 15px;letter-spacing:0.248px;left:819px;">// custom vjass type</span>
<div style="left:62px;top:711px;width:966px;height:1px;background:#d8d8d8;"></div>
<span id="t104" class="t " style="top:719px;font-size:17px;line-height:20px;transform-origin:0 15px;transform:scale(0.9517,0.955);left:13px;">3382</span>
<span id="t105" class="t " style="top:719px;font-size:17px;line-height:20px;transform-origin:0 15px;transform:scale(0.9386,0.955);left:65px;">NATIVE_TYPE</span>
<span id="t106" class="t " style="top:719px;font-size:17px;line-height:20px;transform-origin:0 15px;letter-spacing:0.297px;left:219px;">Timer</span>
<span id="t107" class="t " style="top:719px;font-size:17px;line-height:20px;transform-origin:0 15px;letter-spacing:0.248px;left:819px;">// custom vjass type</span>
<div style="left:62px;top:742px;width:966px;height:1px;background:#d8d8d8;"></div>
<div style="left:1028px;top:143px;width:17px;height:600px;background:#f0f0f0;"></div>
<svg style="left:1032px;top:148px" width="9" height="7" viewBox="0 0 9 7"><path d="M1 5.800l3.500-3.600 3.500 3.600" fill="none" stroke="#5a5a5a" stroke-width="1.800"/></svg>
<svg style="left:1032px;top:731px" width="9" height="7" viewBox="0 0 9 7"><path d="M1 1.200l3.500 3.600 3.500-3.600" fill="none" stroke="#5a5a5a" stroke-width="1.800"/></svg>
<div style="left:1029px;top:705px;width:15px;height:21px;background:#cdcdcd;"></div>
<div style="left:8px;top:743px;width:1037px;height:16px;background:#f0f0f0;"></div>
<div style="left:25px;top:743px;width:903px;height:16px;background:#cdcdcd;"></div>
<svg style="left:13px;top:747px" width="6" height="9" viewBox="0 0 6 9"><path d="M5 1L1.500 4.500 5 8" fill="none" stroke="#555" stroke-width="1.700"/></svg>
<svg style="left:1017px;top:747px" width="6" height="9" viewBox="0 0 6 9"><path d="M1 1l3.500 3.500L1 8" fill="none" stroke="#555" stroke-width="1.700"/></svg>
<div style="left:10px;top:767px;width:25px;height:24px;background:#e1e1e1;border:1px solid #adadad;"></div>
<svg style="left:16px;top:772px" width="12" height="13" viewBox="0 0 12 13"><defs><linearGradient id="pg10" x1="0" y1="0" x2="0" y2="1"><stop offset="0" stop-color="#8fbcf2"/><stop offset="1" stop-color="#3d78cf"/></linearGradient></defs><rect x="1" y="1" width="2.500" height="11" fill="url(#pg10)"/><path d="M11 1v11L3.500 6.500z" fill="url(#pg10)"/></svg>
<div style="left:38px;top:767px;width:25px;height:24px;background:#e1e1e1;border:1px solid #adadad;"></div>
<svg style="left:44px;top:772px" width="12" height="13" viewBox="0 0 12 13"><defs><linearGradient id="pg38" x1="0" y1="0" x2="0" y2="1"><stop offset="0" stop-color="#8fbcf2"/><stop offset="1" stop-color="#3d78cf"/></linearGradient></defs><path d="M9 1v11L2 6.500z" fill="url(#pg38)"/></svg>
<div style="left:219px;top:767px;width:25px;height:24px;background:#e1e1e1;border:1px solid #adadad;"></div>
<svg style="left:225px;top:772px" width="12" height="13" viewBox="0 0 12 13"><defs><linearGradient id="pg219" x1="0" y1="0" x2="0" y2="1"><stop offset="0" stop-color="#8fbcf2"/><stop offset="1" stop-color="#3d78cf"/></linearGradient></defs><path d="M3 1v11l7-5.500z" fill="url(#pg219)"/></svg>
<div style="left:247px;top:767px;width:25px;height:24px;background:#e1e1e1;border:1px solid #adadad;"></div>
<svg style="left:253px;top:772px" width="12" height="13" viewBox="0 0 12 13"><defs><linearGradient id="pg247" x1="0" y1="0" x2="0" y2="1"><stop offset="0" stop-color="#8fbcf2"/><stop offset="1" stop-color="#3d78cf"/></linearGradient></defs><rect x="8.500" y="1" width="2.500" height="11" fill="url(#pg247)"/><path d="M1 1v11l7.500-5.500z" fill="url(#pg247)"/></svg>
<span id="t108" class="t " style="top:770px;font-size:17px;line-height:20px;transform-origin:0 15px;letter-spacing:-0.128px;left:65px;">3365 - 3381 из 3382</span>
<div style="left:613px;top:765px;width:92px;height:27px;background:#e1e1e1;border:1px solid #adadad;"></div>
<span id="t109" class="t " style="top:770px;font-size:17px;line-height:20px;transform-origin:0 15px;letter-spacing:0.194px;left:616px;">Перейти к:</span>
<div style="left:707px;top:765px;width:337px;height:27px;background:#ffffff;border:1px solid #7a7a7a;"></div>
<span id="t110" class="t " style="top:770px;font-size:17px;line-height:20px;transform-origin:0 15px;left:710px;">1</span>
<div style="left:1061px;top:66px;width:540px;height:28px;background:#d9d9d9;border:1px solid #b9b9b9;"></div>
<span id="t111" class="t " style="top:72px;font-size:16px;line-height:20px;transform-origin:0 15px;transform:scale(0.9414,0.955);left:1066px;">Редактирование ячейки БД</span>
<svg style="left:1555px;top:75px" width="10" height="11" viewBox="0 0 10 11"><rect x="3.200" y="0.700" width="6" height="5.500" fill="none" stroke="#1a1a1a" stroke-width="1.300"/><rect x="3.200" y="0.700" width="6" height="1.800" fill="#1a1a1a"/><rect x="0.700" y="4.200" width="6" height="6" fill="#d9d9d9" stroke="#1a1a1a" stroke-width="1.300"/><rect x="0.700" y="4.200" width="6" height="1.800" fill="#1a1a1a"/></svg>
<svg style="left:1581px;top:76px" width="10" height="10" viewBox="0 0 10 10"><path d="M1 1l8 8M9 1l-8 8" stroke="#1a1a1a" stroke-width="1.800"/></svg>
<span id="t112" class="t " style="top:119px;font-size:17px;line-height:20px;transform-origin:0 15px;letter-spacing:-0.228px;left:1072px;">Режим:</span>
<div style="left:1136px;top:113px;width:159px;height:27px;background:#e1e1e1;border:1px solid #adadad;"></div>
<span id="t113" class="t " style="top:118px;font-size:17px;line-height:20px;transform-origin:0 15px;letter-spacing:-0.203px;left:1141px;">Текст</span>
<svg style="left:1279px;top:124px" width="10" height="6" viewBox="0 0 10 6"><path d="M1 0.800l4 4 4-4" fill="none" stroke="#4a4a4a" stroke-width="1.200"/></svg>
<div style="left:1303px;top:115px;width:25px;height:24px;background:#cfe5f8;border:1px solid #1f5a96;"></div>
<svg style="left:1307px;top:119px" width="16" height="16" viewBox="0 0 16 16"><g fill="#d8d8d8" stroke="#9a9a9a" stroke-width="0.700"><circle cx="7" cy="7.500" r="4.600"/><rect x="6" y="1" width="2" height="3" transform="rotate(0 7 7.500)"/><rect x="6" y="1" width="2" height="3" transform="rotate(45 7 7.500)"/><rect x="6" y="1" width="2" height="3" transform="rotate(90 7 7.500)"/><rect x="6" y="1" width="2" height="3" transform="rotate(135 7 7.500)"/><rect x="6" y="1" width="2" height="3" transform="rotate(180 7 7.500)"/><rect x="6" y="1" width="2" height="3" transform="rotate(225 7 7.500)"/><rect x="6" y="1" width="2" height="3" transform="rotate(270 7 7.500)"/><rect x="6" y="1" width="2" height="3" transform="rotate(315 7 7.500)"/></g><circle cx="7" cy="7.500" r="1.800" fill="#f6f6f6" stroke="#9a9a9a" stroke-width="0.700"/><path d="M7 9.500h4V7.300l4.300 3.700L11 14.700V12.500H7z" fill="#6fbf5f" stroke="#3f8a35" stroke-width="0.900" stroke-linejoin="round"/></svg>
<div style="left:1338px;top:109px;width:38px;height:35px;background:#bcdcf4;border:1px solid #cce4f7;"></div>
<svg style="left:1350px;top:120px" width="14" height="16" viewBox="0 0 14 16"><path d="M1.500 0.500h8l3 3v12h-11z" fill="#fdfdfd" stroke="#9a9a9a"/><path d="M3.500 4.500h5M3.500 6.500h7M3.500 8.500h7M3.500 10.500h7M3.500 12.500h6" stroke="#c6c6c6"/></svg>
<svg style="left:1385px;top:120px" width="15" height="14" viewBox="0 0 15 14"><path d="M4 2.500h10M4 5.500h10M4 8.500h10M1 11.500h10" stroke="#5a5a5a" stroke-width="1.200"/><path d="M0.500 3.500l3 2-3 2z" fill="#a8a8a8"/></svg>
<svg style="left:1422px;top:119px" width="16" height="16" viewBox="0 0 16 16"><path d="M0.500 2.500h6l1 1.500h7v11h-14z" fill="#7a7a7a" stroke="#555"/><path d="M4.500 0.500h7l2.500 2.500v6h-9.500z" fill="#fafafa" stroke="#888"/><path d="M6 3.500h5M6 5.500h6" stroke="#c0c0c0"/><path d="M1 8.500h14v7h-14z" fill="#5b8fd8" stroke="#3b63a8"/><path d="M2 9.500h12" stroke="#9cc0f0"/></svg>
<svg style="left:1438px;top:137px" width="8" height="4" viewBox="0 0 8 4"><path d="M0 0h8L4 4z" fill="#000"/></svg>
<svg style="left:1459px;top:119px" width="16" height="16" viewBox="0 0 16 16"><path d="M0.500 0.500h7l3 3v11h-10z" fill="#cfe0fa" stroke="#6f95d8"/><rect x="1.500" y="10" width="5" height="2" fill="#7fa8e6"/><rect x="6.500" y="6.500" width="9" height="9" fill="#5f8ed6" stroke="#3f62a8"/><rect x="8" y="7" width="6" height="3" fill="#eef3fb"/><rect x="9" y="7.500" width="1.200" height="1.500" fill="#3f62a8"/><rect x="8" y="11.500" width="6" height="3.500" fill="#f4f7fd"/><rect x="9.500" y="12.700" width="3.500" height="1.300" fill="#8fcf4f"/></svg>
<svg style="left:1496px;top:120px" width="17" height="16" viewBox="0 0 17 16"><rect x="0.500" y="0.500" width="14" height="12" fill="#f4f8fe" stroke="#7d9fd6"/><rect x="1" y="1" width="13" height="2.500" fill="#7fa3e0"/><path d="M6.500 8.500h4V6.300l4.800 4.200-4.800 4.200V12.500H6.500z" fill="#6fbf5f" stroke="#3f8a35" stroke-width="0.900" stroke-linejoin="round"/></svg>
<svg style="left:1533px;top:120px" width="17" height="16" viewBox="0 0 17 16"><rect x="0.500" y="0.500" width="14" height="12" fill="#f4f8fe" stroke="#7d9fd6"/><rect x="1" y="1" width="13" height="2.500" fill="#7fa3e0"/><rect x="4.500" y="9.500" width="6" height="4.500" rx="2.200" fill="#f2f2f2" stroke="#5a5a5a" stroke-width="1.300"/><rect x="9.500" y="9.500" width="6" height="4.500" rx="2.200" fill="#f2f2f2" stroke="#5a5a5a" stroke-width="1.300"/><path d="M7.500 11.800h5" stroke="#3a3a3a" stroke-width="1.400"/></svg>
<svg style="left:1577px;top:124px" width="10" height="8" viewBox="0 0 10 8"><path d="M0.800 0.500l2.800 3.200-2.800 3.200M5.300 0.500l2.800 3.200-2.800 3.200" fill="none" stroke="#4a4a4a" stroke-width="1.100"/></svg>
<div style="left:1083px;top:165px;width:495px;height:75px;background:#ffffff;border:1px solid #7a7a7a;"></div>
<div style="left:1084px;top:166px;width:30px;height:73px;background:#f0f0f0;"></div>
<span id="t114" class="t " style="top:168px;font-size:16px;line-height:20px;transform-origin:0 15px;left:1087px;">1</span>
<div style="left:1115px;top:166px;width:106px;height:22px;background:#0078d7;"></div>
<span id="t115" class="t " style="top:168px;font-size:16px;line-height:20px;color:#ffffff;transform-origin:0 15px;letter-spacing:-0.130px;left:1115px;">NATIVE_TYPE</span>
<span id="t116" class="t " style="top:260px;font-size:17px;line-height:20px;transform-origin:0 15px;letter-spacing:0.123px;left:1072px;">Тип данных в ячейке: Текст / Числовое</span>
<span id="t117" class="t " style="top:288px;font-size:17px;line-height:20px;transform-origin:0 15px;letter-spacing:-0.058px;left:1072px;">11 символов</span>
<div style="left:1494px;top:268px;width:94px;height:28px;background:#cccccc;border:1px solid #bfbfbf;"></div>
<span id="t118" class="t " style="top:274px;font-size:17px;line-height:20px;color:#838383;transform-origin:0 15px;letter-spacing:0.020px;left:1497px;">Применить</span>
<div style="left:1061px;top:324px;width:540px;height:28px;background:#d9d9d9;border:1px solid #b9b9b9;"></div>
<span id="t119" class="t " style="top:330px;font-size:16px;line-height:20px;transform-origin:0 15px;transform:scale(0.9438,0.955);left:1066px;">Удаленный сервер</span>
<svg style="left:1555px;top:333px" width="10" height="11" viewBox="0 0 10 11"><rect x="3.200" y="0.700" width="6" height="5.500" fill="none" stroke="#1a1a1a" stroke-width="1.300"/><rect x="3.200" y="0.700" width="6" height="1.800" fill="#1a1a1a"/><rect x="0.700" y="4.200" width="6" height="6" fill="#d9d9d9" stroke="#1a1a1a" stroke-width="1.300"/><rect x="0.700" y="4.200" width="6" height="1.800" fill="#1a1a1a"/></svg>
<svg style="left:1581px;top:334px" width="10" height="10" viewBox="0 0 10 10"><path d="M1 1l8 8M9 1l-8 8" stroke="#1a1a1a" stroke-width="1.800"/></svg>
<span id="t120" class="t " style="top:381px;font-size:17px;line-height:20px;transform-origin:0 15px;transform:scale(1.1176,0.955);left:1083px;">ID</span>
<div style="left:1108px;top:376px;width:238px;height:27px;background:#e1e1e1;border:1px solid #adadad;"></div>
<span id="t121" class="t " style="top:381px;font-size:17px;line-height:20px;transform-origin:0 15px;letter-spacing:-0.059px;left:1112px;">Select an identity to connect</span>
<svg style="left:1329px;top:387px" width="10" height="6" viewBox="0 0 10 6"><path d="M1 1l4 4 4-4" fill="none" stroke="#555" stroke-width="1.200"/></svg>
<div style="left:1552px;top:377px;width:25px;height:25px;background:#cccccc;border:1px solid #bfbfbf;"></div>
<svg style="left:1557px;top:382px" width="16" height="16" viewBox="0 0 16 16"><path d="M1.500 2.500v9c0 1 1.800 1.800 4 1.800s4-.8 4-1.800v-9" fill="#dcdcdc" stroke="#adadad"/><ellipse cx="5.500" cy="2.500" rx="4" ry="1.700" fill="#e8e8e8" stroke="#adadad"/><path d="M6 8h4V6l4.500 3.500L10 13v-2H6z" fill="#dedede" stroke="#a8a8a8" stroke-width="0.800"/></svg>
<div style="left:1083px;top:438px;width:493px;height:315px;background:#ffffff;border:1px solid #d9d9d9;"></div>
<div style="left:1183px;top:412px;width:67px;height:27px;background:#f0f0f0;border:1px solid #d9d9d9;"></div>
<span id="t122" class="t " style="top:417px;font-size:17px;line-height:20px;transform-origin:0 15px;transform:scale(0.9350,0.955);left:1197px;">Local</span>
<div style="left:1249px;top:412px;width:160px;height:27px;background:#f0f0f0;border:1px solid #d9d9d9;"></div>
<span id="t123" class="t " style="top:417px;font-size:17px;line-height:20px;transform-origin:0 15px;letter-spacing:-0.146px;left:1265px;">Current Database</span>
<div style="left:1083px;top:410px;width:101px;height:30px;background:#ffffff;border:1px solid #d9d9d9;border-bottom:none;"></div>
<span id="t124" class="t " style="top:416px;font-size:17px;line-height:20px;transform-origin:0 15px;transform:scale(0.9620,0.955);left:1098px;">DBHub.io</span>
<svg style="left:1099px;top:451px" width="16" height="18" viewBox="1.500 1.200 13 13.600" preserveAspectRatio="none"><path d="M2.300 7A5.800 5.800 0 0 1 12.200 3.600L13.800 2v5H8.800l1.800-1.800A3.600 3.600 0 0 0 4.600 7z" fill="#e2e2e2" stroke="#a6a6a6" stroke-width="0.900" stroke-linejoin="round"/><path d="M13.700 9A5.800 5.800 0 0 1 3.800 12.400L2.200 14V9H7.200L5.400 10.800A3.600 3.600 0 0 0 11.400 9z" fill="#ececec" stroke="#a6a6a6" stroke-width="0.900" stroke-linejoin="round"/></svg>
<svg style="left:1137px;top:452px" width="16" height="16" viewBox="0 0 16 16"><path d="M1.500 2.500v9.500c0 1 1.800 1.800 4.200 1.800s4.200-.8 4.200-1.800V2.500" fill="#dddddd" stroke="#b0b0b0"/><ellipse cx="5.700" cy="2.500" rx="4.200" ry="1.700" fill="#ebebeb" stroke="#b0b0b0"/><path d="M3.500 5v7M5.500 5.500v7M7.500 5v7" stroke="#c8c8c8"/><circle cx="11.500" cy="12" r="3.300" fill="#cfcfcf" stroke="#9c9c9c" stroke-width="0.800"/><path d="M11.500 10v4M9.500 12h4" stroke="#fafafa" stroke-width="1.300"/></svg>
<div style="left:1087px;top:487px;width:485px;height:265px;background:#ffffff;border:1px solid #888888;"></div>
<span id="t125" class="t " style="top:495px;font-size:17px;line-height:20px;transform-origin:0 15px;letter-spacing:-0.562px;left:1093px;">Имя</span>
<div style="left:1387px;top:488px;width:1px;height:31px;background:#e5e5e5;"></div>
<span id="t126" class="t " style="top:495px;font-size:17px;line-height:20px;transform-origin:0 15px;letter-spacing:-0.065px;left:1393px;">Изменен</span>
<div style="left:1512px;top:488px;width:1px;height:31px;background:#e5e5e5;"></div>
<span id="t127" class="t " style="top:495px;font-size:17px;line-height:20px;transform-origin:0 15px;transform:scale(1.0439,0.955);left:1518px;width:50.8px;overflow:hidden;">Размер</span>
<div style="left:1088px;top:734px;width:483px;height:17px;background:#f0f0f0;"></div>
<div style="left:1105px;top:734px;width:342px;height:17px;background:#cdcdcd;"></div>
<svg style="left:1093px;top:737px" width="6" height="9" viewBox="0 0 6 9"><path d="M5 1L1.500 4.500 5 8" fill="none" stroke="#555" stroke-width="1.700"/></svg>
<svg style="left:1559px;top:737px" width="6" height="9" viewBox="0 0 6 9"><path d="M1 1l3.500 3.500L1 8" fill="none" stroke="#555" stroke-width="1.700"/></svg>
<div style="left:1060px;top:777px;width:537px;height:1px;background:#d9d9d9;"></div>
<div style="left:1063px;top:777px;width:122px;height:27px;background:#f0f0f0;border:1px solid #d9d9d9;"></div>
<span id="t128" class="t " style="top:782px;font-size:17px;line-height:20px;transform-origin:0 15px;transform:scale(0.9625,0.955);left:1075px;">Журнал SQL</span>
<div style="left:1184px;top:777px;width:90px;height:27px;background:#f0f0f0;border:1px solid #d9d9d9;"></div>
<span id="t129" class="t " style="top:782px;font-size:17px;line-height:20px;transform-origin:0 15px;letter-spacing:0.181px;left:1200px;">График</span>
<div style="left:1273px;top:777px;width:103px;height:27px;background:#f0f0f0;border:1px solid #d9d9d9;"></div>
<span id="t130" class="t " style="top:782px;font-size:17px;line-height:20px;transform-origin:0 15px;letter-spacing:-0.368px;left:1287px;">Схема БД</span>
<div style="left:1375px;top:777px;width:178px;height:29px;background:#ffffff;border:1px solid #d9d9d9;border-top:none;"></div>
<span id="t131" class="t " style="top:782px;font-size:17px;line-height:20px;transform-origin:0 15px;letter-spacing:-0.040px;left:1391px;">Удаленный сервер</span>
<span id="t132" class="t " style="top:813px;font-size:17px;line-height:20px;color:#7a7a7a;transform-origin:0 15px;transform:scale(0.9549,0.955);left:1534px;">UTF-8</span>
<div style="left:1580px;top:810px;width:1px;height:18px;background:#d7d7d7;"></div>
<svg style="left:1584px;top:822px" width="13" height="12" viewBox="0 0 13 12"><rect x="9" y="0" width="2" height="2" fill="#b8b8b8"/><rect x="5" y="4" width="2" height="2" fill="#b8b8b8"/><rect x="9" y="4" width="2" height="2" fill="#b8b8b8"/><rect x="1" y="8" width="2" height="2" fill="#b8b8b8"/><rect x="5" y="8" width="2" height="2" fill="#b8b8b8"/><rect x="9" y="8" width="2" height="2" fill="#b8b8b8"/></svg>
<div style="left:0px;top:833px;width:1597px;height:1px;background:#eef0f1;"></div>
<div style="left:0px;top:834px;width:1597px;height:1px;background:#d0fff9;"></div>
<div style="left:0px;top:835px;width:1597px;height:1px;background:#62aca2;"></div>
</div></body></html>
